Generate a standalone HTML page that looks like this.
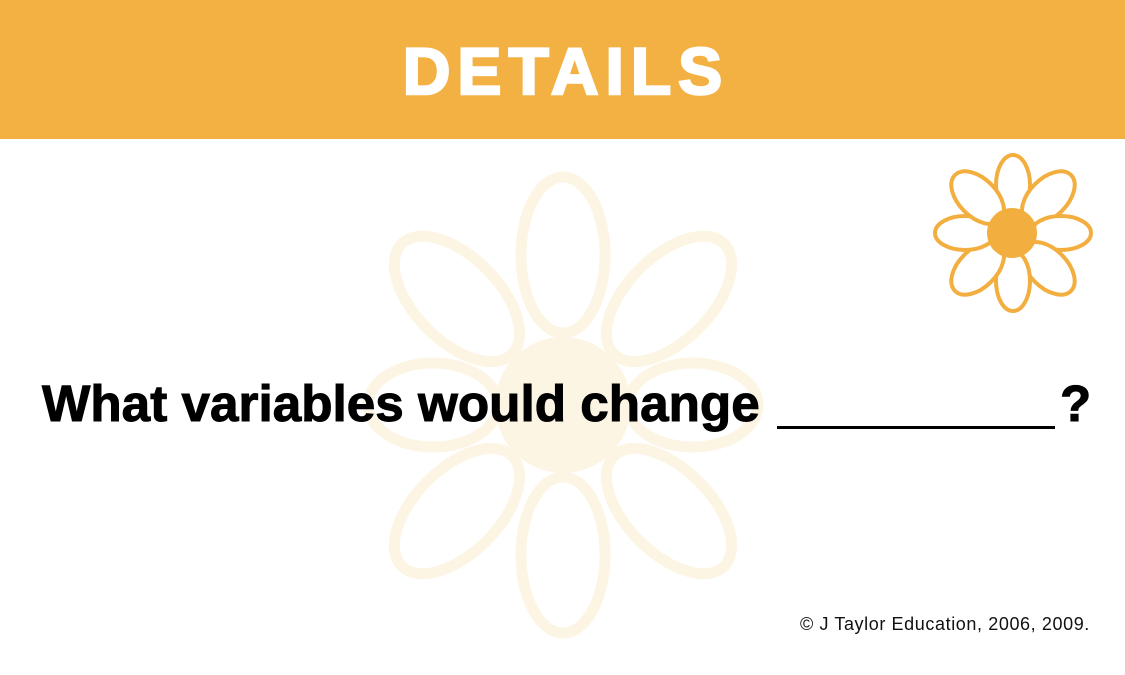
<!DOCTYPE html>
<html><head><style>
body{margin:0;width:1125px;height:675px;background:#fff;position:relative;overflow:hidden;font-family:"Liberation Sans",sans-serif}
.hdr{position:absolute;left:0;top:0;width:1125px;height:139px;background:#f4b143}
.t{position:absolute;left:0;width:1125px;top:36px;text-align:center;color:#fff;font-weight:bold;font-size:66px;letter-spacing:7px;text-indent:7px;line-height:70px;-webkit-text-stroke:2.5px #fff}
.q{position:absolute;left:42px;top:374px;font-weight:bold;font-size:51px;line-height:60px;color:#000;white-space:nowrap;-webkit-text-stroke:1px #000;transform:scaleX(1.005);transform-origin:left}
.ln{position:absolute;left:777px;top:426px;width:278px;height:3px;background:#000}
.qm{position:absolute;left:1060px;top:374px;font-weight:bold;font-size:51px;line-height:60px;-webkit-text-stroke:1px #000}
.c{position:absolute;left:800px;top:614px;font-size:18px;color:#111;letter-spacing:0.6px}
</style></head><body>
<svg width="1125" height="675" style="position:absolute;left:0;top:0">
<g fill="none" stroke="#fdf5e4" stroke-width="11" transform="translate(563,405)">
<ellipse cx="0" cy="-150" rx="42" ry="78"/>
<ellipse cx="0" cy="-150" rx="42" ry="78" transform="rotate(45)"/>
<ellipse cx="0" cy="-130" rx="42" ry="65" transform="rotate(90)"/>
<ellipse cx="0" cy="-150" rx="42" ry="78" transform="rotate(135)"/>
<ellipse cx="0" cy="-150" rx="42" ry="78" transform="rotate(180)"/>
<ellipse cx="0" cy="-150" rx="42" ry="78" transform="rotate(225)"/>
<ellipse cx="0" cy="-130" rx="42" ry="65" transform="rotate(270)"/>
<ellipse cx="0" cy="-150" rx="42" ry="78" transform="rotate(315)"/>
</g>
<circle cx="563" cy="405" r="68" fill="#fdf5e4"/>
<g fill="#fff" stroke="#f2ae3e" stroke-width="4" transform="translate(1013,233)">
<ellipse cx="0" cy="-48" rx="17" ry="30"/>
<ellipse cx="0" cy="-50" rx="19" ry="32" transform="rotate(45)"/>
<ellipse cx="0" cy="-48" rx="17" ry="30" transform="rotate(90)"/>
<ellipse cx="0" cy="-50" rx="19" ry="32" transform="rotate(135)"/>
<ellipse cx="0" cy="-48" rx="17" ry="30" transform="rotate(180)"/>
<ellipse cx="0" cy="-50" rx="19" ry="32" transform="rotate(225)"/>
<ellipse cx="0" cy="-48" rx="17" ry="30" transform="rotate(270)"/>
<ellipse cx="0" cy="-50" rx="19" ry="32" transform="rotate(315)"/>
</g>
<circle cx="1012" cy="233" r="25" fill="#f2ae3e"/>
</svg>
<div class="hdr"></div>
<div class="t">DETAILS</div>
<div class="q">What variables would change</div>
<div class="ln"></div>
<div class="qm">?</div>
<div class="c">© J Taylor Education, 2006, 2009.</div>
</body></html>
